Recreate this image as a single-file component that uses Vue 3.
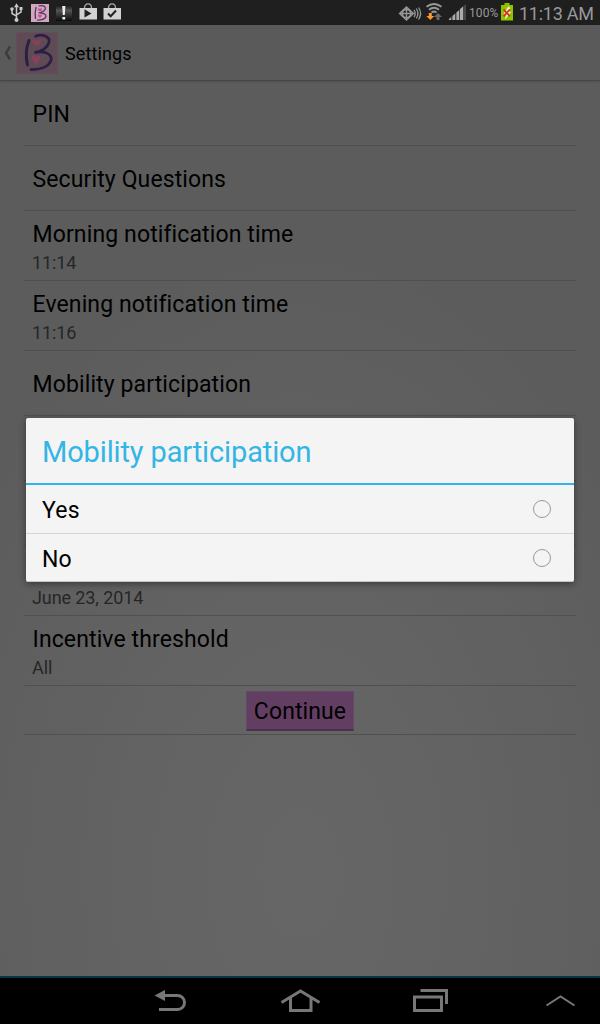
<script setup>
const rows = [
  { title: 'PIN', h: 65 },
  { title: 'Security Questions', h: 65 },
  { title: 'Morning notification time', sub: '11:14', h: 70 },
  { title: 'Evening notification time', sub: '11:16', h: 70 },
  { title: 'Mobility participation', h: 65 },
  { title: '', h: 65 },
  { title: '', h: 65 },
  { title: '', sub: 'June 23, 2014', h: 70 },
  { title: 'Incentive threshold', sub: 'All', h: 70 },
]
const options = ['Yes', 'No']
</script>

<template>
  <div class="screen">
    <header class="status">
      <svg class="left-icons" width="130" height="25" viewBox="0 0 130 25">
        <g fill="none" stroke="#c9c9c9" stroke-width="1.5">
          <path d="M16.5 6v13M16.5 16.2l-4.500-2.700v-4M16.500 14.800l4.500-2.700V9" />
        </g>
        <g fill="#c9c9c9">
          <path d="M16.5 3.200l2.500 4h-5zM19.500 7h3v3h-3z" />
          <circle cx="12" cy="9" r="1.800" /><circle cx="16.500" cy="20" r="2" />
        </g>
        <rect x="31" y="4" width="18" height="18" fill="#d3a6b8" />
        <path d="M36 7.500Q34.500 13 35.500 18.300M39 5.800Q46 5 45.300 9 44 12 38.700 12.800 46.300 13 46 16.500 45 20 37.500 20.200" fill="none" stroke="#4b397d" stroke-width="1.300" stroke-linecap="round" />
        <path d="M40 18.200l-2-2.400q0-1.800 2-.9 2-.9 2 .9zM38 8l2 .8 2-.8-.4 3h-3.200z" fill="#cf5083" />
        <defs>
          <linearGradient id="notice" x1="0" y1="0" x2="0" y2="1"><stop offset="0" stop-color="#151515" /><stop offset=".35" stop-color="#555" /><stop offset=".55" stop-color="#3c3c3c" /><stop offset="1" stop-color="#0c0c0c" /></linearGradient>
        </defs>
        <rect x="56" y="5" width="16" height="16" fill="url(#notice)" />
        <path d="M62.200 6h3.200l-.6 9h-2zM62.400 17h2.800v2.500h-2.800z" fill="#eee" />
        <path d="M79.500 8H97v11.500H79.500zM103.500 8H121v11.500h-17.500z" fill="#d2d2d2" />
        <path d="M84.500 8c0-5.500 7-5.500 7 0M108.500 8c0-5.500 7-5.500 7 0" fill="none" stroke="#aaa" stroke-width="1.300" />
        <path d="M84.500 9.300v8.200l7-4.100z" fill="#222" />
        <path d="M108 13.500l2.700 2.700 5.300-5.700" fill="none" stroke="#222" stroke-width="2" />
      </svg>
      <svg class="right-icons" width="71" height="25" viewBox="396 0 71 25">
        <g fill="none" stroke="#969696" stroke-width="1.300">
          <path d="M399.500 13.500l7-6.500 7 6.500-7 6.500zM399.500 13.500h14M406.500 7v13M402.500 13.500a4 4 0 1 0 8 0a4 4 0 1 0-8 0M414 9.800q2.300 3.700 0 7.400M416.300 8.500q3.200 5 0 10M418.600 7.500q4 6 0 12" />
        </g>
        <g fill="none" stroke="#999" stroke-width="1.900">
          <path d="M426.500 6.800q7.500-5.600 15 0M429 9.800q5-4 10 0M431.500 12.600q2.500-2 5 0" />
        </g>
        <path d="M430.300 13l4 4h-2.500v3h-3v-3h-2.500z" fill="#f8992e" transform="rotate(180 430.300 16.500)" />
        <path d="M438 13l4 4h-2.500v3h-3v-3H434z" fill="#686868" />
        <path d="M448 20L466 4v16z" fill="#474747" />
        <path d="M449 20v-1l2-1.800V20zM452.500 20v-4l2.500-2.200V20zM456.500 20v-7.500l2.500-2.200V20zM460 20V9l3-2.600V20z" fill="#aaa" />
      </svg>
      <span class="percent">100%</span>
      <svg class="battery" width="12" height="18" viewBox="0 0 12 18">
        <path d="M3.500 0h5v2H12v15.500H0V2h3.500z" fill="#8bc500" />
        <path d="M7.500 4L3 11h3l-1.500 4.500L9.500 9h-3L9 5z" fill="#e8f2ce" stroke="#e8f2ce" />
        <path d="M2.500 6.300l6.500 7M9 6.300l-6.500 7" stroke="#df2c1c" stroke-width="1.700" />
      </svg>
      <span class="clock">11:13 AM</span>
    </header>

    <main class="app">
      <div class="bar">
        <svg width="60" height="56" viewBox="0 0 60 56">
          <path d="M10 21.500L6 28l4 6.500" fill="none" stroke="#3c3c3c" stroke-width="2.400" />
          <rect x="16.500" y="7.500" width="41" height="41" fill="#5f4b53" stroke="#664a5e" />
          <path d="M36 39.800L32.300 34.500C30.500 30.500 34 29 36 32.200 38 29 41.500 30.500 39.700 34.500ZM32.500 14.300l4 1.400 4.300-1.400.5 3.300-2.200.3v2.700l-2.600-.8-2.700.8v-2.700l-2-.3z" fill="#87405f" />
          <path d="M29 15.500C26 23 25.300 31 27.500 40" fill="none" stroke="#2b1f47" stroke-width="3" stroke-linecap="round" />
          <path d="M35.500 11.200C43 8.500 50.500 12 49 17.500 47 23.500 41 26.500 34.500 27.700 44 25 52.500 29 51 35.500 48.500 42 40 44.800 31 44.600" fill="none" stroke="#2b1f47" stroke-width="2.700" stroke-linecap="round" />
        </svg>
        <span class="heading">Settings</span>
      </div>
      <section class="list">
        <div v-for="(row, i) in rows" :key="i" class="row" :style="{ height: row.h + 'px' }">
          <div class="title">{{ row.title }}</div>
          <div v-if="row.sub" class="sub">{{ row.sub }}</div>
        </div>
        <div class="action"><button class="continue">Continue</button></div>
      </section>
    </main>

    <nav class="nav">
      <svg width="600" height="46" viewBox="0 978 600 46">
        <g fill="none" stroke="#777" stroke-width="3">
          <path d="M164 995.500h13.500a7 7 0 0 1 0 14H159" />
          <path d="M281.500 1002.500L300.500 991l19 11.500M290.500 998v12.500h20.500V998" />
          <path d="M414.500 997h27v13.500h-27zM420.500 990.500h26v13.500" />
          <path d="M546.500 1005.500l14-9 14 9" stroke-width="2" />
        </g>
        <path d="M154.500 995.500l10.500-5.500v11z" fill="#777" />
      </svg>
    </nav>

    <div class="dialog" role="dialog">
      <h1 class="dialog-title">Mobility participation</h1>
      <label v-for="o in options" :key="o" class="option">
        <span>{{ o }}</span><i class="radio"></i>
      </label>
    </div>
  </div>
</template>

<style>
body { margin: 0; background: #000; }
</style>

<style scoped>
.screen { position: relative; width: 600px; height: 1024px; display: flex; flex-direction: column; overflow: hidden; font-family: Roboto, "Noto Sans", sans-serif; color: #000; }
.status { height: 25px; flex: none; background: #1f1f1f; display: flex; align-items: center; color: #999; }
.left-icons { margin-right: auto; }
.percent { width: 32px; margin-left: 2px; font-size: 12px; letter-spacing: 0.1px; line-height: 25px; margin-top: 1px; white-space: nowrap; }
.battery { margin-top: -2px; }
.clock { width: 76px; margin: 2px 5px 0 6px; font-size: 18px; letter-spacing: -0.25px; line-height: 25px; white-space: nowrap; }
.app { flex: 1; background: radial-gradient(ellipse 400px 640px at 300px 850px, #666 0%, #636363 45%, #5c5c5c 100%); }
.bar { height: 56px; box-sizing: border-box; display: flex; align-items: center; background: #5a5a5a; border-bottom: 1px solid #464646; box-shadow: 0 1px 2px rgba(0, 0, 0, 0.15); }
.heading { margin-left: 5px; font-size: 18px; letter-spacing: 0.1px; margin-top: 2px; }
.list { margin: 0 24px; }
.row { box-sizing: border-box; border-bottom: 1px solid #505050; padding: 0 8px; display: flex; flex-direction: column; justify-content: center; }
.title { font-size: 23px; line-height: 30px; letter-spacing: 0.12px; min-height: 30px; padding: 3px 0 0 0.5px; margin-bottom: -1px; }
.sub { font-size: 18px; line-height: 24px; letter-spacing: -0.1px; color: #262626; padding-top: 2px; }
.action { box-sizing: border-box; height: 49px; border-bottom: 1px solid #505050; display: flex; justify-content: center; align-items: center; }
.continue { width: 108px; height: 40px; padding: 1px 0 0; margin-top: 2px; border: 1px solid #664765; border-bottom: 2px solid #4c304f; border-radius: 1px; background: #623f62; color: #000; font: 23px Roboto, sans-serif; letter-spacing: 0.1px; }
.nav { height: 46px; background: #000; border-top: 2px solid #043548; }
.nav svg { display: block; }
.dialog { position: absolute; left: 26px; top: 418px; width: 548px; height: 164px; box-sizing: border-box; border-bottom: 1px solid #c5c5c5; border-radius: 2px; background: #f4f4f4; box-shadow: 0 2px 7px rgba(0, 0, 0, 0.4); overflow: hidden; }
.dialog-title { margin: 0; height: 63px; border-bottom: 2px solid #33b5e5; padding: 2px 16px 0; line-height: 65px; font-size: 29px; letter-spacing: -0.13px; font-weight: 400; color: #33b5e5; }
.option { display: flex; justify-content: space-between; align-items: center; box-sizing: border-box; height: 49px; padding: 0 23px 0 16px; border-bottom: 1px solid #d5d5d5; font-size: 23px; letter-spacing: 0.2px; }
.option span { padding-top: 2px; }
.option:last-child { border: 0; height: 48px; }
.radio { width: 16px; height: 16px; border: 1px solid #999; border-radius: 50%; }
</style>
